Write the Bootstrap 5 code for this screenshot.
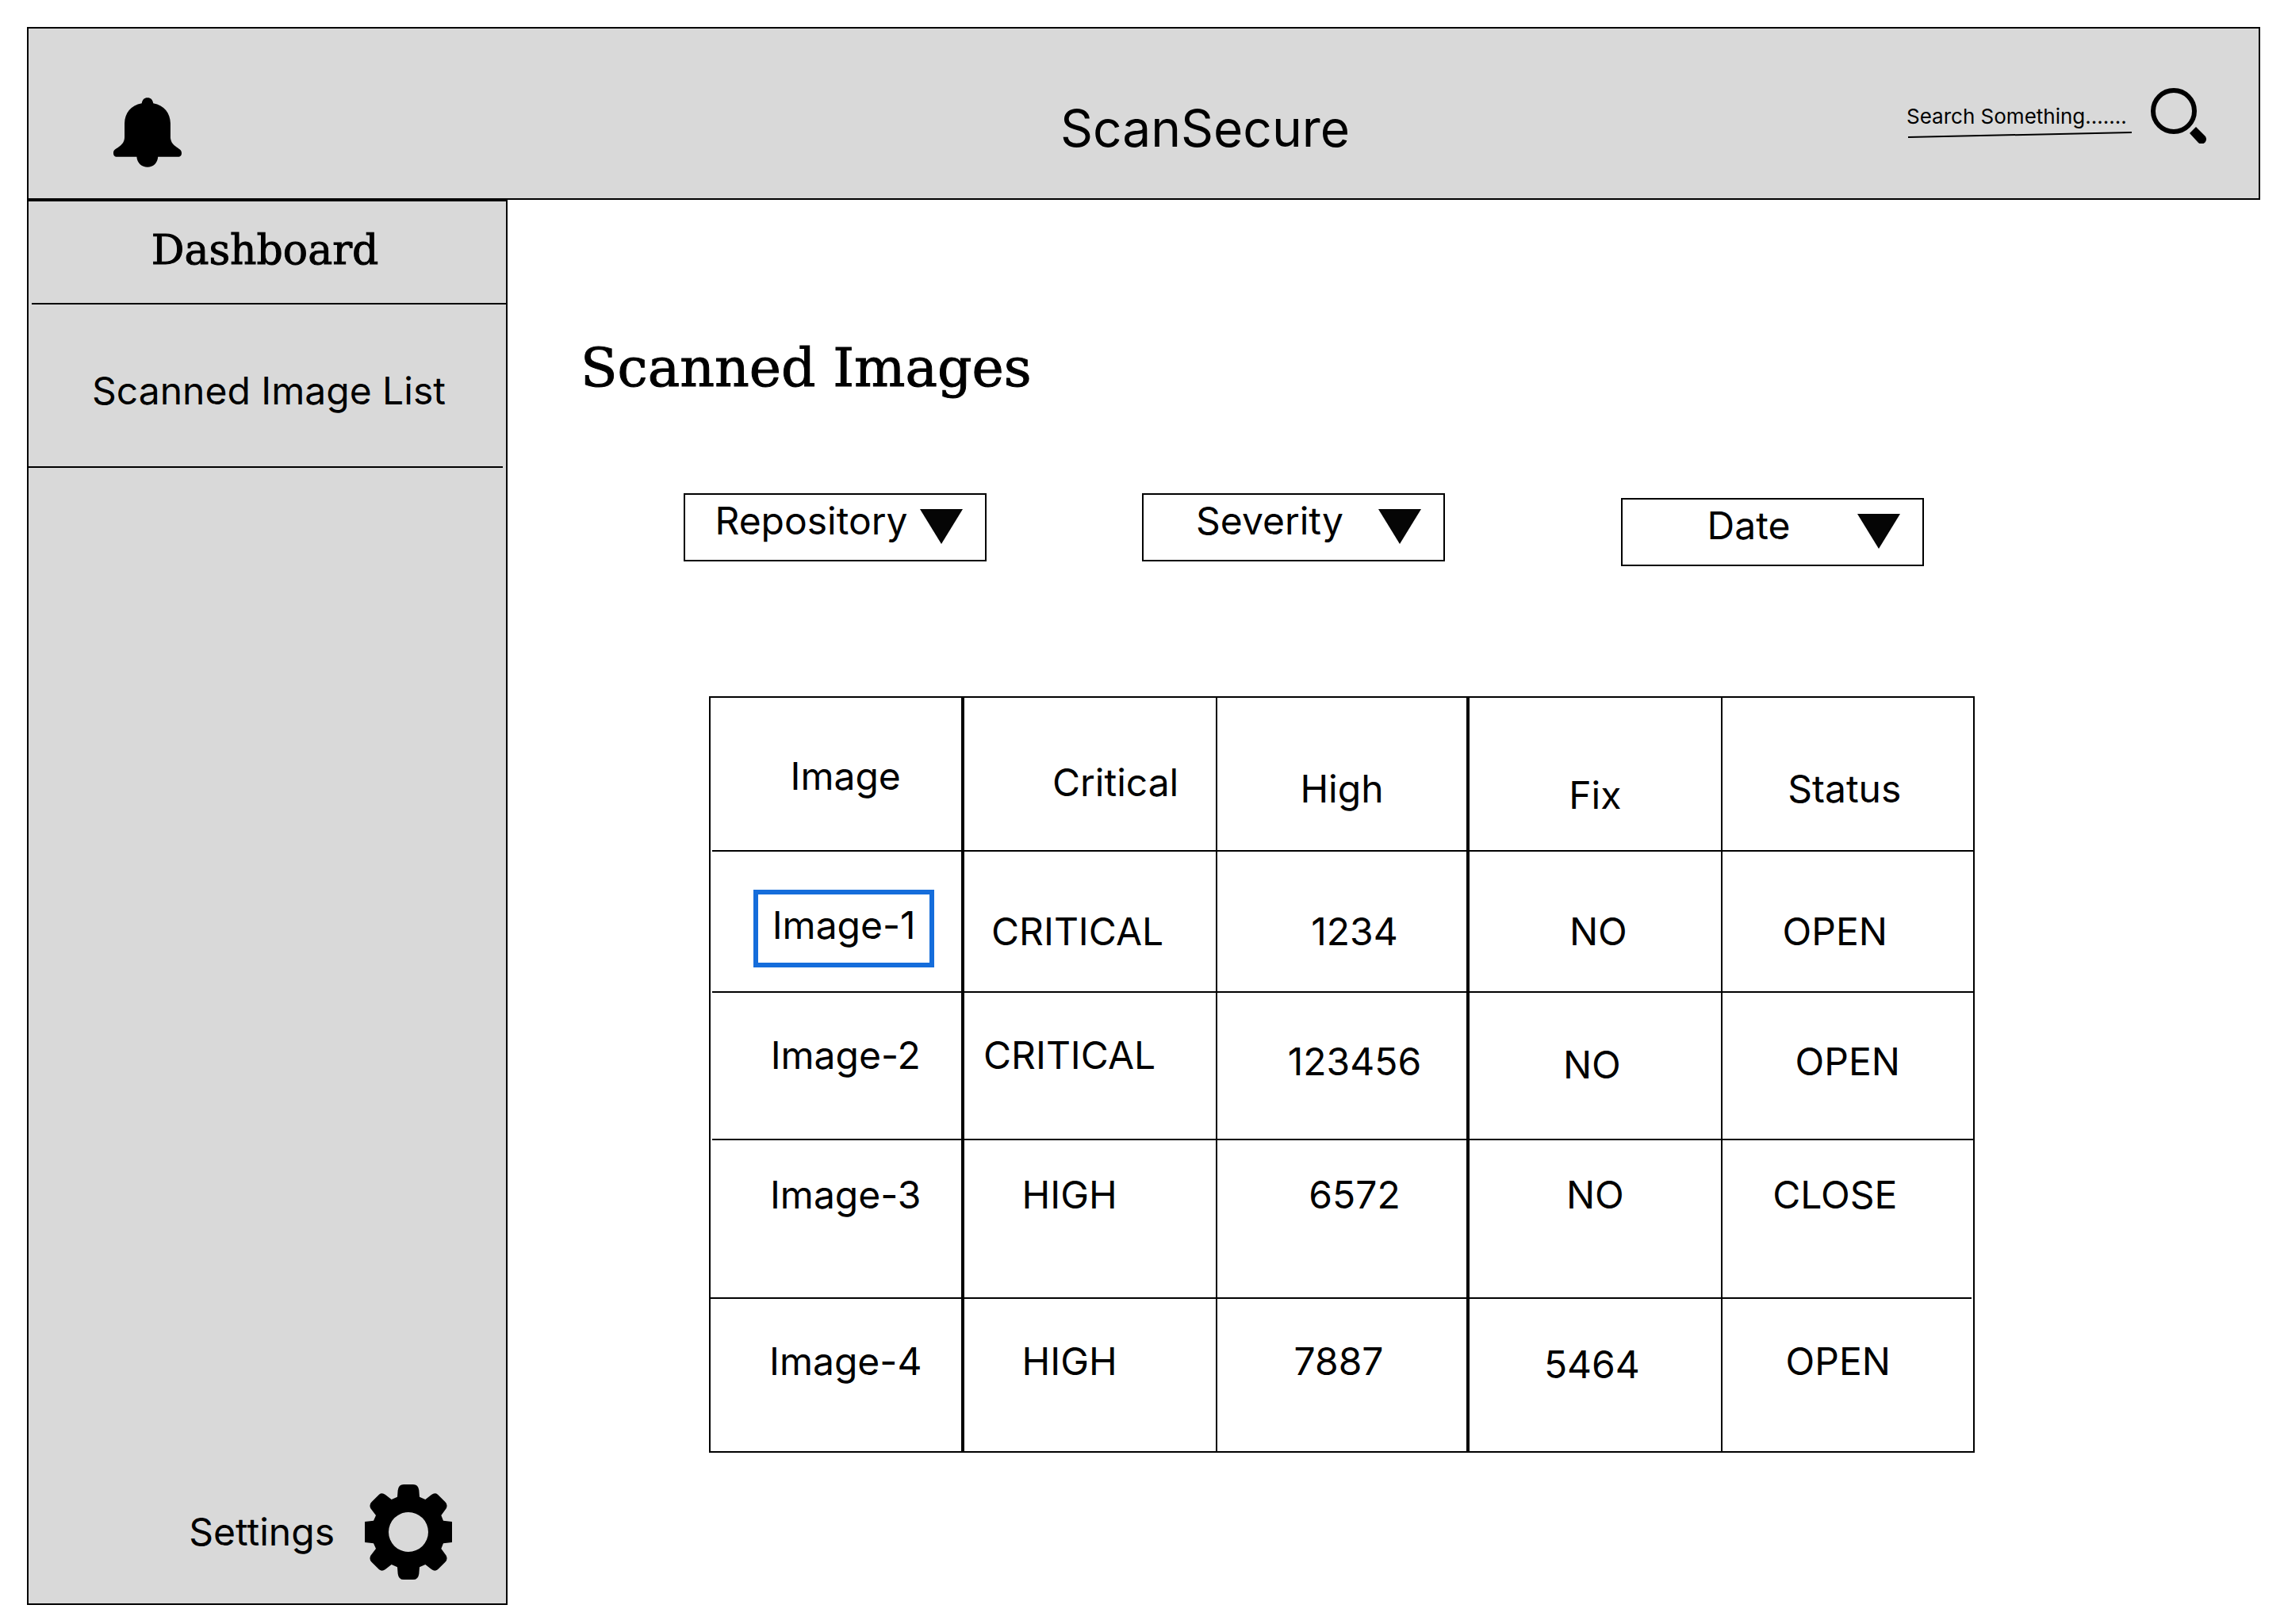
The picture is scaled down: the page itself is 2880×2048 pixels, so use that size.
<!DOCTYPE html>
<html lang="en">
<head>
<meta charset="utf-8">
<meta name="viewport" content="width=device-width, initial-scale=1">
<title>ScanSecure</title>
<link href="https://cdn.jsdelivr.net/npm/bootstrap@5.3.0/dist/css/bootstrap.min.css" rel="stylesheet">
<style>
  body { font-family: Inter, sans-serif; font-size: 48px; line-height: 58px; color: #000; background: #fff; }
  .page { padding: 34px 30px 24px 34px; }
  .panel { background: #d9d9d9; border: 2px solid #000; }
  .display-serif { font-family: "DejaVu Serif", serif; font-weight: 400; margin: 0; -webkit-text-stroke: 1px #000; }
  a { color: inherit; text-decoration: none; }
  svg { display: block; flex: none; }

  /* top bar */
  .topbar { height: 218px; padding: 75px 66px 0 107px; }
  .topbar .drop-12 { margin-top: 12px; }
  .brand { font-size: 64px; line-height: 78px; font-weight: 400; padding-left: 406px; margin: 0; }
  .search-field { width: 284px; padding-top: 20px; margin-right: 24px; }
  .search-field input { font-size: 26px; line-height: 32px; height: 32px; padding: 0; color: #000; background: none; border: 0; border-radius: 0; }
  .search-field input:focus { background: none; box-shadow: none; }
  .search-field input::placeholder { color: #000; opacity: 1; }
  .icon-btn { padding: 0; border: 0; background: none; }

  /* sidebar */
  .sidebar { width: 606px; flex: none; }
  .side-head { height: 130px; padding-top: 31px; margin-left: 4px; border-bottom: 2px solid #000; }
  .side-head h2 { font-size: 52px; line-height: 61px; padding-right: 10px; }
  .side-link { height: 206px; padding: 80px 0 0 8px; margin-right: 4px; border-bottom: 2px solid #000; }
  .side-foot { gap: 38px; padding: 0 68px 30px 0; }

  /* content */
  .content { padding-top: 172px; }
  .content h1 { font-size: 68px; line-height: 80px; margin-left: 92px; }
  .filters { margin: 118px 0 0 222px; }
  .filter-box { width: 382px; height: 86px; }
  .filter-box select { height: 100%; font-size: 48px; line-height: 58px; color: #000; border: 2px solid #000; border-radius: 0; background: #fff; padding: 0 60px 16px 0; text-align: center; text-align-last: center; }
  .filter-box svg { position: absolute; right: 30px; top: 20px; pointer-events: none; }
  .gap-b { margin-left: 196px; }
  .gap-c { margin: 6px 0 0 222px; }

  /* table */
  .table-area { margin: 164px 360px 0 254px; }
  .scan-table { --bs-table-bg: transparent; --bs-table-color: #000; table-layout: fixed; border: 2px solid #000; border-collapse: separate; border-spacing: 0; margin: 0; text-align: center; }
  .scan-table > * > tr > * { padding: var(--top) 0 0; border: 0; font-weight: 400; box-shadow: none; vertical-align: top; }
  .scan-table > * > tr > * + * { border-left: 2px solid #000; }
  .scan-table > * > tr > :nth-child(odd):not(:last-child) { border-right: 2px solid #000; }
  .scan-table tr { background: linear-gradient(#000, #000) no-repeat right bottom / calc(100% - 2px) 2px; }
  .scan-table tr.from-left { background-position: left bottom; }
  .scan-table tr.last-row { background: none; }
  .row-head { --top: 70px; height: 194px; }
  .row-one { --top: 72px; height: 178px; }
  .row-two { --top: 50px; height: 186px; }
  .row-three { --top: 40px; height: 200px; }
  .row-four { --top: 50px; height: 192px; }
  .scan-table > * > tr > .east-4 { padding-left: 8px; }
  .scan-table > * > tr > .east-12 { padding-left: 24px; }
  .scan-table > * > tr > .east-16 { padding-left: 32px; }
  .scan-table > * > tr > .east-32 { padding-left: 64px; }
  .scan-table > * > tr > .west-4 { padding-right: 8px; }
  .scan-table > * > tr > .west-12 { padding-right: 24px; }
  .scan-table > * > tr > .west-16 { padding-right: 32px; }
  .scan-table > * > tr > .west-28 { padding-right: 52px; }
  .scan-table > * > tr > .south-4 { padding-top: calc(var(--top) + 4px); }
  .scan-table > * > tr > .south-8 { padding-top: calc(var(--top) + 8px); }
  .scan-table > * > tr > .south-12 { padding-top: calc(var(--top) + 12px); }
  .scan-table > * > tr > .south-16 { padding-top: calc(var(--top) + 16px); }
  .scan-table > * > tr > .south-24 { padding-top: calc(var(--top) + 24px); }
  .scan-table > * > tr > .holds-link { padding-top: 48px; padding-left: 20px; }
  .picked { display: block; width: 228px; height: 98px; margin: 0 auto; padding-top: 10px; border: 6px solid #156ddb; }
</style>
</head>
<body>
<div class="page min-vh-100 d-flex flex-column">
  <header class="topbar panel d-flex align-items-start">
    <button type="button" class="icon-btn drop-12" aria-label="Notifications">
      <svg width="86" height="88" viewBox="341 368 202 266" preserveAspectRatio="none"><path d="M425 390C427 376 432 369 442 369C452 369 457 376 459 390C492 398 509 427 510 466V522C512 540 518 547 528 557C538 566 543 569 543 579C543 589 540 594 532 594H473C472 618 459 633 442 633C425 633 411 618 410 594H352C344 594 341 589 341 579C341 568 347 565 356 557C367 547 374 538 374 518V466C375 427 392 398 425 390Z"/></svg>
    </button>
    <p class="brand drop-12 flex-grow-1 text-center">ScanSecure</p>
    <div class="search-field">
      <input type="text" class="form-control" placeholder="Search Something......." aria-label="Search">
      <svg width="284" height="14" viewBox="0 0 284 14"><path d="M2 10L284 4" stroke="#000" stroke-width="2"/></svg>
    </div>
    <button type="button" class="icon-btn" aria-label="Search">
      <svg width="70" height="70" viewBox="0 0 70 70"><circle cx="29" cy="29" r="26" fill="none" stroke="#000" stroke-width="6"/><path d="M57 49L68 60A6 6 0 0 1 60 69L49 57Z"/></svg>
    </button>
  </header>

  <div class="d-flex flex-grow-1">
    <nav class="sidebar panel d-flex flex-column">
      <div class="side-head text-center"><h2 class="display-serif">Dashboard</h2></div>
      <a href="#" class="side-link d-block text-center">Scanned Image List</a>
      <a href="#" class="side-foot mt-auto d-flex justify-content-end align-items-center">
        <span>Settings</span>
        <svg width="110" height="120" viewBox="780 96 330 360"><path fill-rule="evenodd" d="M903 143L905 118Q908 96 927 96H963Q982 96 985 118L987 143L1009 153L1032 135Q1045 125 1056 134L1084 162Q1095 172 1088 187L1069 213L1077 233L1110 237V315L1077 319L1069 339L1088 365Q1095 380 1084 390L1056 418Q1045 427 1032 417L1009 399L987 409L985 434Q982 456 963 456H927Q908 456 905 434L903 409L881 399L858 417Q845 427 834 418L806 390Q795 380 802 365L822 339L813 319L780 315V237L813 233L822 213L802 187Q795 172 806 162L834 134Q845 125 858 135L881 153ZM870 276A75 75 0 1 0 1020 276A75 75 0 1 0 870 276Z"/></svg>
      </a>
    </nav>

    <main class="content flex-grow-1">
      <h1 class="display-serif">Scanned Images</h1>

      <div class="filters d-flex align-items-start">
        <div class="filter-box position-relative">
          <select class="form-select" aria-label="Repository"><option>Repository</option></select>
          <svg width="54" height="44" viewBox="0 0 54 44"><path d="M0 0H54L27 44Z" fill="#050505"/></svg>
        </div>
        <div class="filter-box gap-b position-relative">
          <select class="form-select" aria-label="Severity"><option>Severity</option></select>
          <svg width="54" height="44" viewBox="0 0 54 44"><path d="M0 0H54L27 44Z" fill="#050505"/></svg>
        </div>
        <div class="filter-box gap-c position-relative">
          <select class="form-select" aria-label="Date"><option>Date</option></select>
          <svg width="54" height="44" viewBox="0 0 54 44"><path d="M0 0H54L27 44Z" fill="#050505"/></svg>
        </div>
      </div>

      <div class="table-area">
        <table class="table scan-table">
          <thead>
            <tr class="row-head">
              <th scope="col" class="east-12">Image</th>
              <th scope="col" class="east-32 south-8">Critical</th>
              <th scope="col" class="south-16">High</th>
              <th scope="col" class="south-24">Fix</th>
              <th scope="col" class="west-4 south-16">Status</th>
            </tr>
          </thead>
          <tbody>
            <tr class="row-one">
              <td class="holds-link"><a href="#" class="picked">Image-1</a></td>
              <td class="west-16">CRITICAL</td>
              <td class="east-16">1234</td>
              <td class="east-4">NO</td>
              <td class="west-16">OPEN</td>
            </tr>
            <tr class="row-two">
              <td class="east-12">Image-2</td>
              <td class="west-28">CRITICAL</td>
              <td class="east-16 south-8">123456</td>
              <td class="west-4 south-12">NO</td>
              <td class="south-8">OPEN</td>
            </tr>
            <tr class="row-three from-left">
              <td class="east-12">Image-3</td>
              <td class="west-28">HIGH</td>
              <td class="east-16">6572</td>
              <td>NO</td>
              <td class="west-16">CLOSE</td>
            </tr>
            <tr class="row-four last-row">
              <td class="east-12">Image-4</td>
              <td class="west-28">HIGH</td>
              <td class="west-4">7887</td>
              <td class="west-4 south-4">5464</td>
              <td class="west-12">OPEN</td>
            </tr>
          </tbody>
        </table>
      </div>
    </main>
  </div>
</div>
<script src="https://cdn.jsdelivr.net/npm/bootstrap@5.3.0/dist/js/bootstrap.bundle.min.js"></script>
</body>
</html>
